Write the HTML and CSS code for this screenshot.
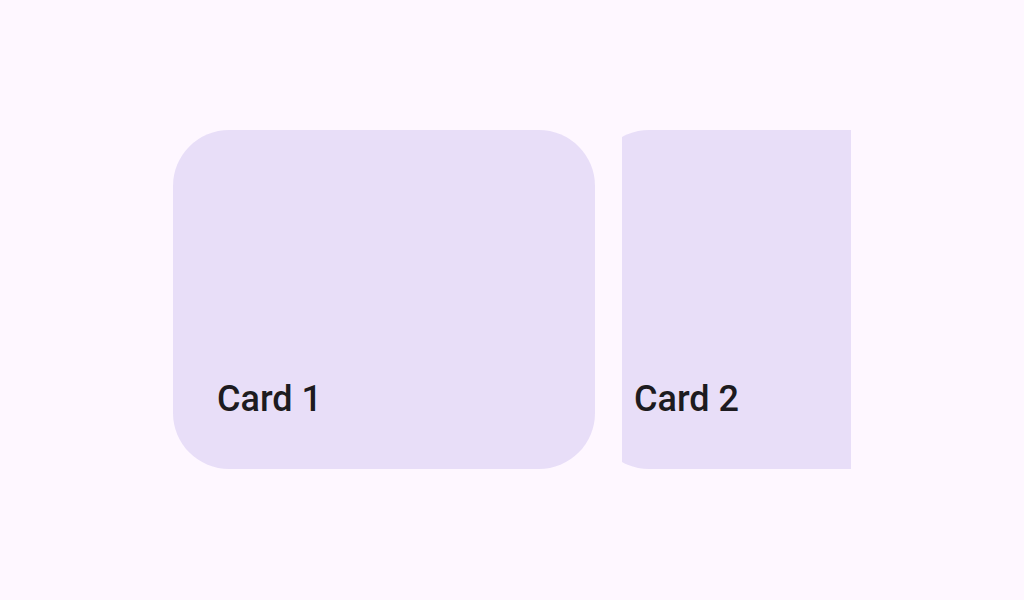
FILE: index.html
```html
<!DOCTYPE html>
<html>
<head>
<meta charset="utf-8">
<link rel="stylesheet" href="styles.css">
</head>
<body>
<div class="stage">
  <div class="carousel">
    <div class="card card-large">
      <span class="label">Card 1</span>
    </div>
    <div class="mask">
      <div class="card card-small">
        <span class="label">Card 2</span>
      </div>
    </div>
  </div>
</div>
</body>
</html>
```
FILE: styles.css
```css
html, body {
  margin: 0;
  padding: 0;
  background: #fef7ff;
  width: 1024px;
  height: 600px;
  overflow: hidden;
}
.stage {
  display: flex;
  padding-top: 130px;
  padding-left: 173px;
}
.carousel {
  display: flex;
  gap: 27px;
  width: 678px;
  height: 339px;
  overflow: hidden;
}
.card {
  background: #e8def8;
  border-radius: 56px;
  height: 339px;
  display: flex;
  align-items: flex-end;
  box-sizing: border-box;
}
.card-large {
  flex: 0 0 422px;
  padding: 0 0 48px 44px;
}
.mask {
  flex: 0 0 229px;
  height: 339px;
  overflow: hidden;
}
.card-small {
  width: 330px;
  margin-left: -29px;
  padding: 0 0 48px 41px;
}
.label {
  font-family: Roboto, "Noto Sans", sans-serif;
  font-weight: 500;
  font-size: 36px;
  line-height: 44px;
  color: #1d1b20;
}
```
